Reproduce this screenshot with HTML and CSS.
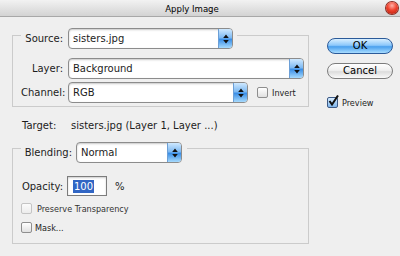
FILE: index.html
```html
<!DOCTYPE html>
<html lang="en">
<head>
    <meta charset="UTF-8">
    <title>Apply Image</title>
    <link rel="stylesheet" href="styles.css">
</head>
<body>
<div class="window">
    <div class="titlebar">
        <span class="title">Apply Image</span>
        <span class="close"></span>
    </div>

    <div class="content">
        <div class="main">
            <fieldset class="group source-group">
                <legend class="group-head">
                    <span class="label">Source:</span>
                    <div class="popup w-source">
                        <span class="popup-text">sisters.jpg</span>
                        <span class="arrows"><svg width="6" height="10" viewBox="0 0 6 10"><path d="M3 0.5 L5.8 4 H0.2 Z M3 9.5 L5.8 6 H0.2 Z" fill="#111"/></svg></span>
                    </div>
                </legend>
                <div class="row">
                    <span class="label">Layer:</span>
                    <div class="popup w-layer">
                        <span class="popup-text">Background</span>
                        <span class="arrows"><svg width="6" height="10" viewBox="0 0 6 10"><path d="M3 0.5 L5.8 4 H0.2 Z M3 9.5 L5.8 6 H0.2 Z" fill="#111"/></svg></span>
                    </div>
                </div>
                <div class="row">
                    <span class="label">Channel:</span>
                    <div class="popup w-channel">
                        <span class="popup-text">RGB</span>
                        <span class="arrows"><svg width="6" height="10" viewBox="0 0 6 10"><path d="M3 0.5 L5.8 4 H0.2 Z M3 9.5 L5.8 6 H0.2 Z" fill="#111"/></svg></span>
                    </div>
                    <label class="check invert"><span class="box"></span>Invert</label>
                </div>
            </fieldset>

            <div class="target">
                <span class="label">Target:</span>
                <span>sisters.jpg (Layer 1, Layer ...)</span>
            </div>

            <fieldset class="group blend-group">
                <legend class="group-head">
                    <span class="label">Blending:</span>
                    <div class="popup w-blend">
                        <span class="popup-text">Normal</span>
                        <span class="arrows"><svg width="6" height="10" viewBox="0 0 6 10"><path d="M3 0.5 L5.8 4 H0.2 Z M3 9.5 L5.8 6 H0.2 Z" fill="#111"/></svg></span>
                    </div>
                </legend>
                <div class="row opacity-row">
                    <span class="label">Opacity:</span>
                    <div class="field"><span class="selected">100</span></div>
                    <span class="unit">%</span>
                </div>
                <label class="check disabled preserve"><span class="box"></span>Preserve Transparency</label>
                <label class="check mask"><span class="box"></span>Mask...</label>
            </fieldset>
        </div>

        <div class="side">
            <div class="btn primary">OK</div>
            <div class="btn">Cancel</div>
            <label class="check checked preview">
                <span class="box"><svg width="13" height="13" viewBox="0 0 13 13"><path d="M2.5 6 L5 9.5 L11 0.5" fill="none" stroke="#111" stroke-width="2"/></svg></span>Preview
            </label>
        </div>
    </div>
</div>
</body>
</html>
```

FILE: styles.css
```css
html, body {
    margin: 0;
    padding: 0;
}
body {
    width: 400px;
    height: 256px;
    overflow: hidden;
    background-color: #efefef;
    font-family: "DejaVu Sans", sans-serif;
    font-size: 10px;
    color: #1c1c1c;
}
.window {
    height: 256px;
}

/* title bar */
.titlebar {
    height: 16px;
    border-bottom: 1px solid #a8a8a8;
    background: linear-gradient(#f2f2f2, #d3d3d3);
    display: flex;
    align-items: center;
    justify-content: center;
    padding-right: 16px;
    position: relative;
}
.title {
    font-family: "DejaVu Sans Condensed", "DejaVu Sans", sans-serif;
    font-size: 9.5px;
    color: #000;
}
.close {
    position: absolute;
    right: 2px;
    top: 2px;
    width: 12px;
    height: 12px;
    border-radius: 50%;
    background: radial-gradient(circle at 50% 30%, #ffb2a8 0%, #f0442f 45%, #b01808 100%);
    box-shadow: 0 0 0 1px #8a2a20;
}

/* layout */
.content {
    display: flex;
}
.main {
    width: 309px;
    box-sizing: border-box;
    padding: 5px 0 0 12px;
}
.side {
    padding: 21px 0 0 18px;
    display: flex;
    flex-direction: column;
    align-items: flex-start;
}

/* groups */
.group {
    margin: 0;
    border: 1px solid #cbcbcb;
    width: 297px;
    box-sizing: border-box;
    padding: 0 0 3px 8px;
}
.group-head {
    display: flex;
    align-items: center;
    padding: 6px 4px 0 0;
}
.blend-group .group-head {
    padding: 8px 5px 0 0;
}
.label {
    text-align: right;
    white-space: nowrap;
}
.group .label {
    width: 42px;
    margin-right: 5px;
}
.blend-group .group-head .label {
    width: 51px;
    margin-right: 4px;
}
.blend-group .opacity-row .label {
    margin-right: 4px;
}
.row {
    display: flex;
    align-items: center;
    margin-top: 3px;
}
.source-group .row:first-of-type {
    margin-top: 9px;
}

/* popups */
.popup {
    height: 21px;
    box-sizing: border-box;
    border: 1px solid #8c8c8c;
    border-radius: 4px;
    background: #fff;
    box-shadow: inset 0 1px 2px rgba(0, 0, 0, 0.22);
    display: flex;
    align-items: center;
    overflow: hidden;
}
.popup-text {
    flex: 1;
    padding-left: 4px;
}
.arrows {
    width: 13px;
    align-self: stretch;
    display: flex;
    align-items: center;
    justify-content: center;
    border-left: 1px solid #6c9fd6;
    background: linear-gradient(#cfe9ff, #7fbaf2 45%, #3c8fe6 55%, #a6dafd);
}
.w-source { width: 165px; }
.w-layer { width: 236px; }
.w-channel { width: 180px; }
.w-blend { width: 106px; }

/* checkboxes */
.check {
    display: flex;
    align-items: center;
    font-family: "DejaVu Sans Condensed", "DejaVu Sans", sans-serif;
    font-size: 9px;
}
.box {
    width: 11px;
    height: 11px;
    box-sizing: border-box;
    border: 1px solid #8e8e8e;
    border-radius: 2px;
    background: linear-gradient(#ffffff, #e0e0e0);
    margin-right: 4px;
    position: relative;
}
.invert {
    margin-left: 9px;
}
.check.disabled {
    color: #333;
}
.check.disabled .box {
    border-color: #c4c4c4;
    background: linear-gradient(#fbfbfb, #ececec);
}
.preserve {
    margin-top: 7px;
}
.preserve .box {
    margin-right: 5px;
}
.mask {
    margin-top: 8px;
    margin-bottom: 7px;
}
.mask .box {
    margin-right: 3px;
}
.check.checked .box {
    border-color: #3d5a86;
    background: linear-gradient(#d7ecff, #7fb6ec);
}
.check.checked .box svg {
    position: absolute;
    left: -1px;
    top: -3px;
}

/* target line */
.target {
    display: flex;
    margin: 12px 0 1px;
    padding-left: 10px;
    line-height: 14px;
}
.target .label {
    width: 49px;
    text-align: left;
}

/* opacity */
.opacity-row {
    margin-top: 13px;
}
.field {
    width: 40px;
    height: 20px;
    box-sizing: border-box;
    border: 1px solid #7c7c7c;
    background: #fff;
    box-shadow: inset 0 1px 2px rgba(0, 0, 0, 0.2);
    padding-left: 5px;
    display: flex;
    align-items: center;
}
.selected {
    background: #3166c4;
    color: #fff;
    padding: 0 1px;
    line-height: 13px;
}
.unit {
    margin-left: 8px;
}

/* buttons */
.btn {
    width: 66px;
    height: 16px;
    box-sizing: border-box;
    border: 1px solid #7d7d7d;
    border-radius: 9px;
    background: linear-gradient(#ffffff, #f0f0f0 45%, #dcdcdc 55%, #fafafa);
    text-align: center;
    line-height: 14px;
    font-size: 10px;
    color: #000;
}
.btn.primary {
    border-color: #2b5a99;
    background: linear-gradient(#d9efff, #8cc8fb 45%, #4aa0ee 55%, #a8dcff);
    margin-bottom: 9px;
}
.preview {
    margin-top: 18px;
}
.preview .box {
    width: 11px;
    height: 11px;
}
```
